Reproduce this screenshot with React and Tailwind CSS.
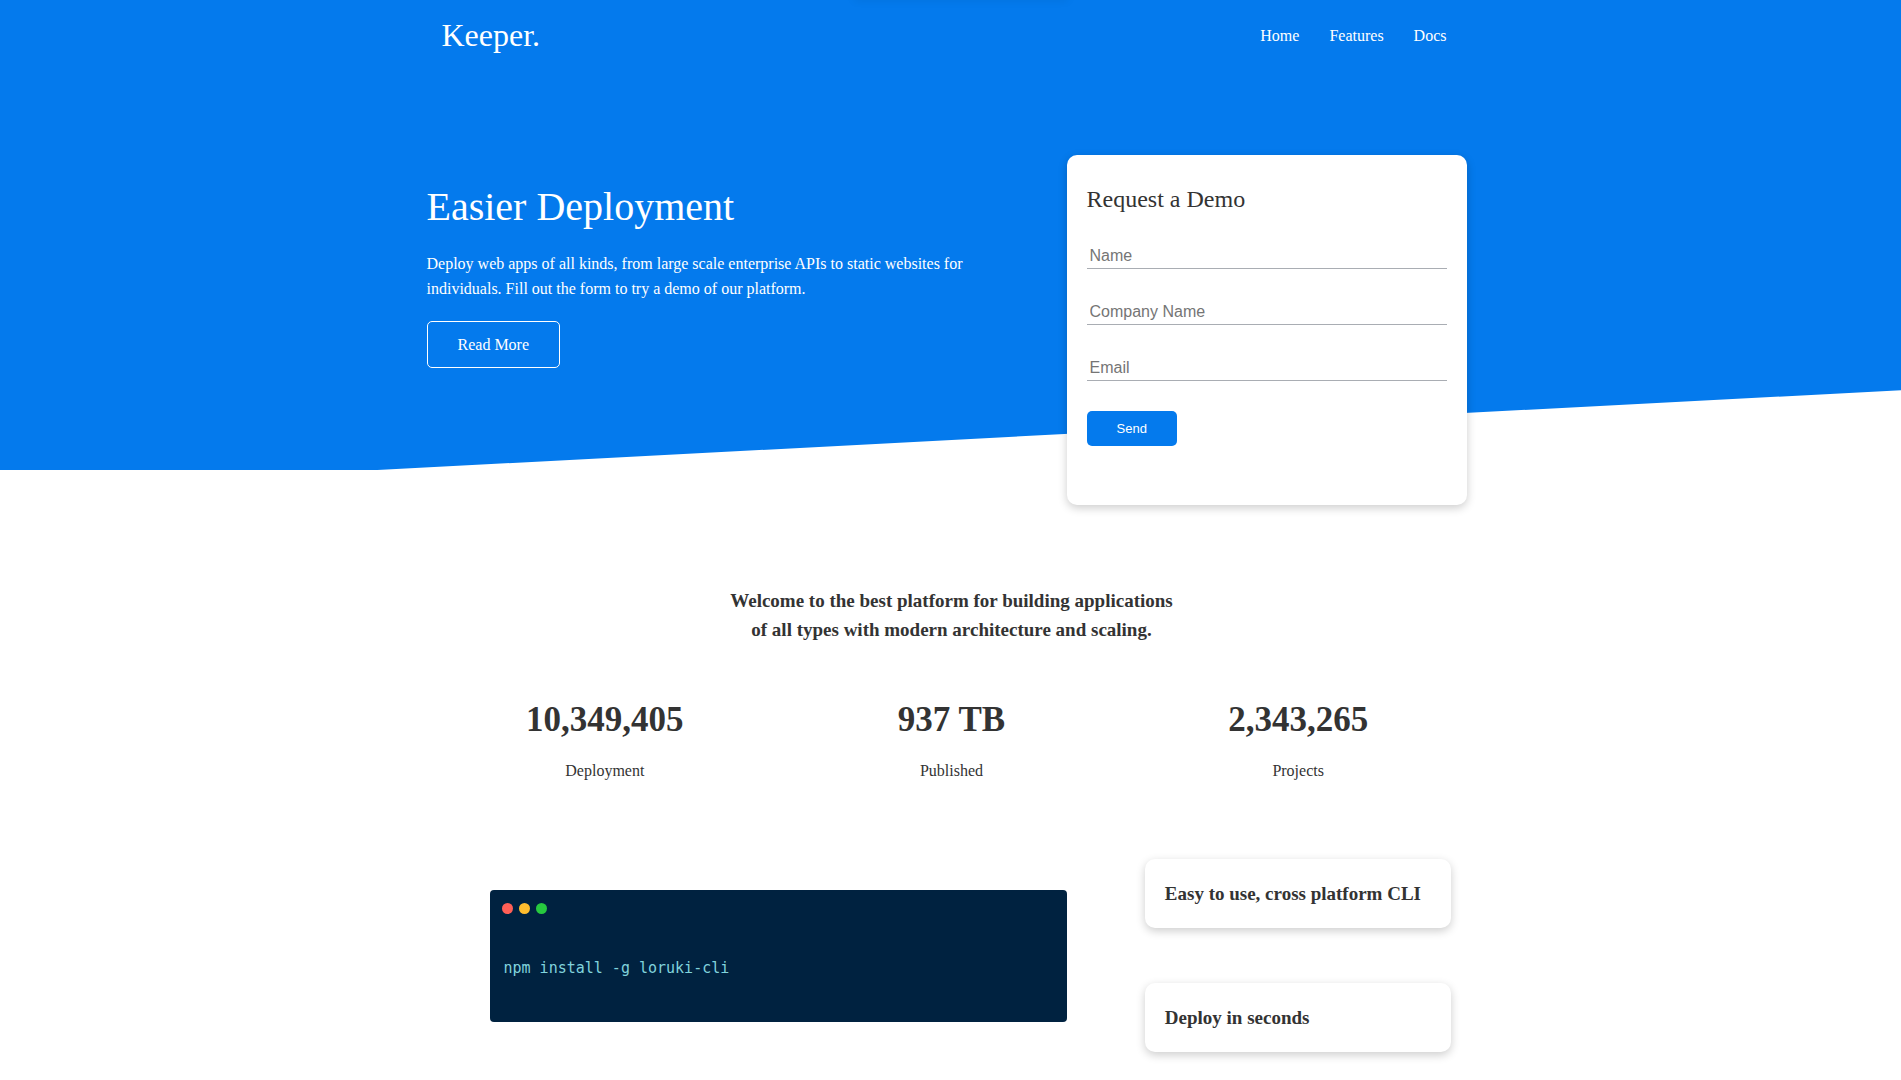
import React from "react";

const navLinks = ["Home", "Features", "Docs"];

const fields = [
  { id: "name", label: "Name", type: "text" },
  { id: "company", label: "Company Name", type: "text" },
  { id: "email", label: "Email", type: "email" },
];

const stats = [
  { value: "10,349,405", label: "Deployment" },
  { value: "937 TB", label: "Published" },
  { value: "2,343,265", label: "Projects" },
];

const features = ["Easy to use, cross platform CLI", "Deploy in seconds"];

function Navbar() {
  return (
    <header className="bg-[#047aed] text-white">
      <div className="mx-auto flex h-[70px] max-w-[1102px] items-center justify-between pr-10 pl-[42px]">
        <div className="text-[32px] leading-[42px]">Keeper.</div>
        <nav>
          <ul className="flex gap-2.5 px-[5px]">
            {navLinks.map((link) => (
              <li key={link}>
                <a href="#" className="block p-2.5 leading-[25px]">
                  {link}
                </a>
              </li>
            ))}
          </ul>
        </nav>
      </div>
    </header>
  );
}

function DemoForm() {
  return (
    <form
      className="mr-2.5 mb-[-35px] min-h-[350px] w-[400px] justify-self-end rounded-[10px] bg-white p-5 text-[#333] shadow-[0_3px_10px_rgba(0,0,0,0.2)]"
      onSubmit={(e) => e.preventDefault()}
    >
      <h2 className="mb-7 pt-2 text-2xl leading-8">Request a Demo</h2>
      <div className="flex flex-col gap-[30px]">
        {fields.map((f) => (
          <input
            key={f.id}
            id={f.id}
            name={f.id}
            type={f.type}
            aria-label={f.label}
            placeholder={f.label}
            className="h-[26px] w-full border-b border-[#a9adb3] px-[3px] font-['Liberation_Sans',Arial,sans-serif] text-base placeholder:text-[#757575] focus:outline-none"
          />
        ))}
        <button
          type="submit"
          className="cursor-pointer self-start rounded-[5px] bg-[#047aed] px-[30px] py-2.5 font-['Liberation_Sans',Arial,sans-serif] text-[13px] leading-[15px] text-white"
        >
          Send
        </button>
      </div>
    </form>
  );
}

function Hero() {
  return (
    <section className="relative bg-[#047aed] text-white after:absolute after:inset-x-0 after:bottom-[-70px] after:h-[100px] after:-skew-y-3 after:bg-white after:content-['']">
      <div className="relative z-10 mx-auto grid max-w-[1052px] grid-cols-[11fr_9fr] gap-[30px] pt-[85px] pl-0.5">
        <div className="pt-7">
          <h1 className="text-[40px] leading-[48px]">Easier Deployment</h1>
          <p className="mt-5 leading-[25px]">
            Deploy web apps of all kinds, from large scale enterprise APIs to
            static websites for individuals. Fill out the form to try a demo of
            our platform.
          </p>
          <a
            href="#"
            className="mt-5 inline-block rounded-[5px] border border-white px-[30px] py-2.5 leading-[25px]"
          >
            Read More
          </a>
        </div>
        <DemoForm />
      </div>
    </section>
  );
}

function Stats() {
  return (
    <section className="relative mx-auto max-w-[1102px] pt-[116px] pr-10 pl-[42px] text-center">
      <h3 className="mx-auto max-w-[500px] text-[19px] leading-[29px] font-bold">
        Welcome to the best platform for building applications
        <br />
        of all types with modern architecture and scaling.
      </h3>
      <div className="mt-[49px] grid grid-cols-3 gap-5">
        {stats.map((s) => (
          <div key={s.label}>
            <h3 className="mb-[11px] text-[35px] leading-[54px] font-bold">{s.value}</h3>
            <p className="leading-[25px]">{s.label}</p>
          </div>
        ))}
      </div>
    </section>
  );
}

function Terminal() {
  return (
    <div className="mx-12 h-[132px] rounded-[4px] bg-[#002240] px-3 py-[13px]">
      <div className="flex gap-1.5">
        <span className="size-[11px] rounded-full bg-[#ff5f56]" />
        <span className="size-[11px] rounded-full bg-[#ffbd2e]" />
        <span className="size-[11px] rounded-full bg-[#27c93f]" />
      </div>
      <pre className="mt-11 px-0.5 font-['DejaVu_Sans_Mono',monospace] text-[15px] leading-5 text-[#80d3dc]">
        npm install -g loruki-cli
      </pre>
    </div>
  );
}

function Cli() {
  return (
    <section className="mx-auto mt-[76px] grid max-w-[1102px] grid-cols-3 items-center gap-5 pr-10 pb-10 pl-[42px]">
      <div className="col-span-2">
        <Terminal />
      </div>
      <div className="mx-2.5 flex flex-col gap-[55px]">
        {features.map((text) => (
          <div
            key={text}
            className="rounded-[10px] bg-white p-5 shadow-[0_3px_10px_rgba(0,0,0,0.2)]"
          >
            <h3 className="text-[19px] leading-[29px] font-bold">{text}</h3>
          </div>
        ))}
      </div>
    </section>
  );
}

export default function App() {
  return (
    <div className="relative overflow-hidden bg-white font-['Liberation_Serif','Times_New_Roman',serif] text-base text-[#333]">
      <div className="absolute inset-x-0 -top-1 flex justify-center pl-5">
        <div className="h-1 w-[216px] rounded-full shadow-[0_0_8px_rgba(0,0,0,0.1)]" />
      </div>
      <Navbar />
      <Hero />
      <Stats />
      <Cli />
    </div>
  );
}
